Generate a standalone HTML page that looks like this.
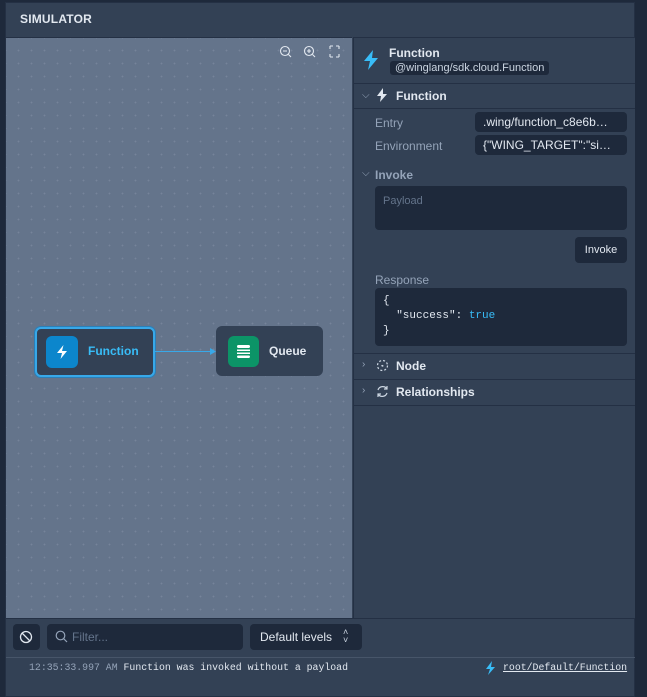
<!DOCTYPE html>
<html><head><style>
*{box-sizing:border-box;margin:0;padding:0}
body{width:647px;height:697px;background:#1e293b;font-family:"Liberation Sans",sans-serif;position:relative;overflow:hidden;color:#e2e8f0}
.abs{position:absolute}
.frame{left:5px;top:2px;width:630px;height:695px;background:#334155;border:1px solid #243044}
.canvas{left:6px;top:37px;width:346px;height:581px;background-color:#64748b;background-image:radial-gradient(circle,#76849a 0.7px,transparent 1.1px);background-size:13px 13px;background-position:6px 6px;border-top:1px solid #243044}
.right{left:353px;top:37px;width:282px;height:581px;background:#334155;border-left:1px solid #243044;border-top:1px solid #243044}
.line{position:absolute;left:0;right:0;height:1px;background:#243044}
.lbl{font-size:12px;color:#94a3b8}
.inp{background:#1e293b;border-radius:4px}
.b{font-weight:bold;font-size:12px;color:#e2e8f0}
.mono{font-family:"Liberation Mono",monospace}
</style></head><body>
<div class="abs frame"></div>
<div class="abs" style="left:20px;top:12px;font-size:12px;font-weight:bold;color:#e2e8f0;letter-spacing:.2px">SIMULATOR</div>
<div class="abs canvas">
  <svg class="abs" style="left:273px;top:6px" width="66" height="16" viewBox="0 0 66 16" fill="none" stroke="#e2e8f0" stroke-width="1.1">
    <circle cx="6" cy="7" r="4.5"/><path d="M9.5 10.5L12 13M4 7h4"/>
    <circle cx="30" cy="7" r="4.5"/><path d="M33.5 10.5L36 13M28 7h4M30 5v4"/>
    <path d="M51 2h3M51 2v3M60 2h-3M60 2v3M51 13h3M51 13v-3M60 13h-3M60 13v-3"/>
  </svg>
  <div class="abs" style="left:29px;top:289px;width:120px;height:50px;background:#334155;border:2px solid #38a8e8;border-radius:6px;box-shadow:0 0 0 1px #2b7fb8"></div>
  <div class="abs" style="left:40px;top:298px;width:32px;height:32px;background:#0c86cc;border-radius:6px"></div>
  <svg class="abs" style="left:48px;top:306px" width="16" height="16" viewBox="0 0 16 16"><path d="M9.5 1L3 9h5L6.5 15 13 7H8z" fill="#fff"/></svg>
  <div class="abs" style="left:82px;top:306px;font-size:12px;font-weight:bold;color:#38bdf8">Function</div>
  <div class="abs" style="left:149px;top:313px;width:58px;height:1px;background:#38a8e8"></div>
  <svg class="abs" style="left:204px;top:310px" width="6" height="7"><path d="M0 0L6 3.5 0 7z" fill="#38a8e8"/></svg>
  <div class="abs" style="left:210px;top:288px;width:107px;height:50px;background:#334155;border-radius:6px"></div>
  <div class="abs" style="left:222px;top:298px;width:31px;height:31px;background:#0c9467;border-radius:6px"></div>
  <svg class="abs" style="left:229px;top:305px" width="17" height="17" viewBox="0 0 17 17" fill="#fff"><rect x="2" y="2" width="13" height="3" rx="1.5"/><rect x="2" y="6.5" width="13" height="1.5"/><rect x="2" y="9.5" width="13" height="1.5"/><rect x="2" y="12.5" width="13" height="2.5" rx="1.2"/></svg>
  <div class="abs" style="left:263px;top:306px;font-size:12px;font-weight:bold;color:#e2e8f0">Queue</div>
</div>
<div class="abs right">
  <svg class="abs" style="left:8px;top:12px" width="18" height="20" viewBox="0 0 18 20"><path d="M11 0L2 11h6L6 20l10-12h-6z" fill="#38bdf8"/></svg>
  <div class="abs b" style="left:35px;top:8px">Function</div>
  <div class="abs" style="left:36px;top:23px;background:#1e293b;border-radius:3px;font-size:11px;color:#cbd5e1;padding:1px 5px">@winglang/sdk.cloud.Function</div>
  <div class="line" style="top:45px"></div>
  <div class="abs" style="left:8px;top:52px;font-size:10px;color:#94a3b8">⌵</div>
  <svg class="abs" style="left:22px;top:50px" width="12" height="14" viewBox="0 0 12 14"><path d="M7 0L1 8h4L4 14l7-8H7z" fill="#e2e8f0"/></svg>
  <div class="abs b" style="left:42px;top:51px">Function</div>
  <div class="line" style="top:70px"></div>
  <div class="abs lbl" style="left:21px;top:78px">Entry</div>
  <div class="abs inp" style="left:121px;top:74px;width:152px;height:20px;font-size:12px;color:#e2e8f0;padding:3px 8px;overflow:hidden;white-space:nowrap">.wing/function_c8e6b…</div>
  <div class="abs lbl" style="left:21px;top:101px">Environment</div>
  <div class="abs inp" style="left:121px;top:97px;width:152px;height:20px;font-size:12px;color:#e2e8f0;padding:3px 8px;overflow:hidden;white-space:nowrap">{"WING_TARGET":"si…</div>
  <div class="abs" style="left:8px;top:130px;font-size:10px;color:#94a3b8">⌵</div>
  <div class="abs lbl" style="left:21px;top:130px;font-weight:bold">Invoke</div>
  <div class="abs inp" style="left:21px;top:148px;width:252px;height:44px;font-size:11px;color:#64748b;padding:9px 8px">Payload</div>
  <div class="abs inp" style="left:221px;top:199px;width:52px;height:26px;font-size:11px;color:#e2e8f0;padding:7px 0;text-align:center">Invoke</div>
  <div class="abs lbl" style="left:21px;top:235px">Response</div>
  <div class="abs inp mono" style="left:21px;top:250px;width:252px;height:58px;font-size:11px;color:#e2e8f0;padding:6px 8px;line-height:15px;white-space:pre">{
  "success": <span style="color:#38bdf8">true</span>
}</div>
  <div class="line" style="top:315px"></div>
  <div class="abs" style="left:8px;top:321px;font-size:10px;color:#94a3b8">›</div>
  <svg class="abs" style="left:22px;top:321px" width="13" height="13" viewBox="0 0 13 13" fill="none" stroke="#cbd5e1" stroke-width="1.2" stroke-dasharray="2 2"><circle cx="6.5" cy="6.5" r="5"/><circle cx="6.5" cy="6.5" r=".6" fill="#cbd5e1"/></svg>
  <div class="abs b" style="left:42px;top:321px">Node</div>
  <div class="line" style="top:341px"></div>
  <div class="abs" style="left:8px;top:347px;font-size:10px;color:#94a3b8">›</div>
  <svg class="abs" style="left:22px;top:347px" width="13" height="13" viewBox="0 0 13 13" fill="none" stroke="#cbd5e1" stroke-width="1.2"><path d="M2 5a5 5 0 0 1 9-1M11 8a5 5 0 0 1-9 1M11 1v3H8M2 12V9h3"/></svg>
  <div class="abs b" style="left:42px;top:347px">Relationships</div>
  <div class="line" style="top:367px"></div>
</div>
<div class="line abs" style="left:6px;width:629px;top:618px;background:#243044"></div>
<div class="abs inp" style="left:13px;top:624px;width:27px;height:26px"></div>
<svg class="abs" style="left:19px;top:630px" width="14" height="14" viewBox="0 0 14 14" fill="none" stroke="#e2e8f0" stroke-width="1.3"><circle cx="7" cy="7" r="5.5"/><path d="M3 3l8 8"/></svg>
<div class="abs inp" style="left:47px;top:624px;width:196px;height:26px"></div>
<svg class="abs" style="left:55px;top:630px" width="13" height="13" viewBox="0 0 13 13" fill="none" stroke="#94a3b8" stroke-width="1.2"><circle cx="5.5" cy="5.5" r="4.3"/><path d="M8.5 8.5L12 12"/></svg>
<div class="abs" style="left:72px;top:630px;font-size:12px;color:#64748b">Filter...</div>
<div class="abs inp" style="left:250px;top:624px;width:112px;height:26px"></div>
<div class="abs" style="left:260px;top:630px;font-size:12px;color:#e2e8f0">Default levels</div>
<div class="abs" style="left:343px;top:628px;font-size:9px;color:#cbd5e1;line-height:8px">˄<br>˅</div>
<div class="abs" style="left:6px;top:657px;width:629px;height:1px;background:#475569"></div>
<div class="abs mono" style="left:29px;top:662px;font-size:9.85px;color:#94a3b8">12:35:33.997 AM <span style="color:#e2e8f0">Function was invoked without a payload</span></div>
<svg class="abs" style="left:485px;top:661px" width="11" height="14" viewBox="0 0 11 14"><path d="M7 0L1 8h4L3 14l7-8H6z" fill="#38bdf8"/></svg>
<div class="abs mono" style="left:503px;top:662px;font-size:9.85px;color:#e2e8f0;text-decoration:underline">root/Default/Function</div>
</body></html>
